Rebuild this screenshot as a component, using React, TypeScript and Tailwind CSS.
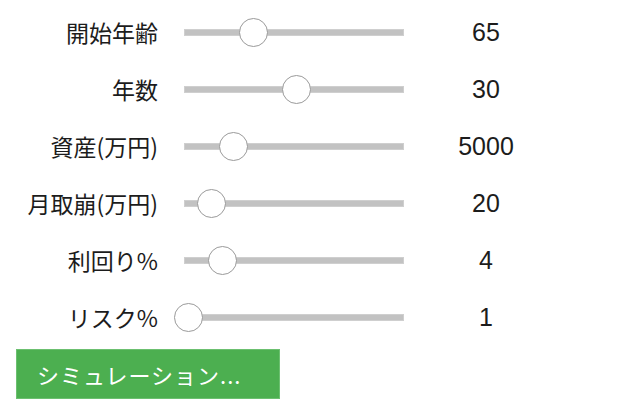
import React from "react";

const rows = [
  { label: "開始年齢", value: "65", thumb: 252.5 },
  { label: "年数", value: "30", thumb: 295.5 },
  { label: "資産(万円)", value: "5000", thumb: 232 },
  { label: "月取崩(万円)", value: "20", thumb: 210.5 },
  { label: "利回り%", value: "4", thumb: 221 },
  { label: "リスク%", value: "1", thumb: 187 },
];

const TRACK_LEFT = 184;

export default function App() {
  return (
    <div
      className="w-[640px] h-[405px] bg-white text-[#1c1c1c] pt-[4px]"
      style={{ fontFamily: '"Noto Sans CJK JP", "Noto Sans", sans-serif' }}
    >
      {rows.map((r) => (
        <div key={r.label} className="h-[57px] flex items-center">
          <div className="w-[158px] text-right text-[23px] leading-none">{r.label}</div>
          <div className="ml-[26px] w-[220px] h-[7px] relative bg-[#c2c2c2] border border-[#cfcfcf]">
            <div
              className="absolute top-1/2 w-[29px] h-[29px] -mt-[14.5px] -ml-[14.5px] rounded-full bg-white border-[1.5px] border-[#9a9a9a]"
              style={{ left: `${r.thumb - TRACK_LEFT}px` }}
            />
          </div>
          <div
            className="ml-[32px] w-[100px] text-center text-[25px] leading-none"
            style={{ fontFamily: '"Liberation Sans", Arial, sans-serif' }}
          >
            {r.value}
          </div>
        </div>
      ))}
      <div className="ml-[16px] mt-[3px] w-[264px] h-[50px] bg-[#4caf50] border border-[#6cc070] flex items-center pl-[20px] text-white text-[22px] tracking-[1px] leading-none">
        シミュレーション...
      </div>
    </div>
  );
}
